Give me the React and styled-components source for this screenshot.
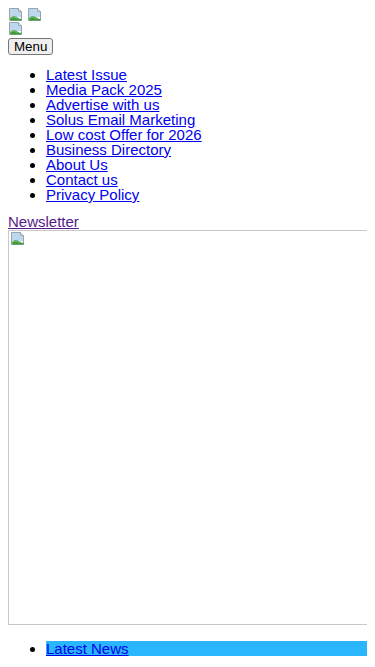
import React from "react";
import styled, { createGlobalStyle } from "styled-components";

const Global = createGlobalStyle`
  body {
    margin: 8px;
    background: #ffffff;
    font-family: "Liberation Sans", Arial, sans-serif;
    font-size: 15px;
    line-height: 15px;
    color: #000000;
  }
`;

const Header = styled.header`
  display: flex;
  flex-direction: column;
`;

const IconRow = styled.div`
  display: flex;
  gap: 3px;
  height: 14px;
  align-items: flex-start;
`;

const MenuButton = styled.button`
  align-self: flex-start;
  margin-top: 2px;
  height: 17px;
  padding: 0 5px;
  font-family: "Liberation Sans", Arial, sans-serif;
  font-size: 13.33px;
  line-height: 13px;
  color: #000;
  background: #efefef;
  border: 1px solid #767676;
  border-radius: 3px;
`;

const List = styled.ul`
  margin: ${(p) => p.$top}px 0 0;
  padding-left: 38px;
  list-style: disc;
`;

const Item = styled.li`
  line-height: 15px;
  background: ${(p) => (p.$highlight ? "#29b6fc" : "transparent")};
`;

const Link = styled.a`
  color: ${(p) => (p.$visited ? "#551a8b" : "#0000ee")};
  text-decoration: underline;
`;

const NewsletterLine = styled.div`
  margin-top: 12px;
  line-height: 15px;
`;

const Banner = styled.div`
  margin-top: 1px;
  width: calc(100vw - 8px);
  height: 395px;
  box-sizing: border-box;
  border: 1px solid #c8c8c8;
  border-right: none;
  padding: 1px 0 0 1px;
`;

const BrokenImage = () => (
  <svg width="16" height="14" viewBox="0 0 16 14">
    <path d="M1.5 0.5h9l3 3v9h-12z" fill="#f4f7fa" stroke="#9aa4ae" />
    <path d="M2 1h8v3h3v5H2z" fill="#bcd8ee" />
    <path d="M2 12.5V10c3-3 6-2 9 0.5 1 0.6 2 0.4 2.5 0V12.5z" fill="#3f9b3a" />
    <path d="M2 12V10.5c2.5-2 5-1.5 7.5 0.5" fill="none" stroke="#7bc46a" />
    <path d="M10.5 0.5v3h3" fill="#e6ebf0" stroke="#9aa4ae" />
  </svg>
);

const menuItems = [
  "Latest Issue",
  "Media Pack 2025",
  "Advertise with us",
  "Solus Email Marketing",
  "Low cost Offer for 2026",
  "Business Directory",
  "About Us",
  "Contact us",
  "Privacy Policy",
];

export default function App() {
  return (
    <>
      <Global />
      <Header>
        <IconRow>
          <BrokenImage />
          <BrokenImage />
        </IconRow>
        <IconRow>
          <BrokenImage />
        </IconRow>
        <MenuButton>Menu</MenuButton>
      </Header>
      <List $top={12}>
        {menuItems.map((label) => (
          <Item key={label}>
            <Link href="#">{label}</Link>
          </Item>
        ))}
      </List>
      <NewsletterLine>
        <Link href="#" $visited>
          Newsletter
        </Link>
      </NewsletterLine>
      <Banner>
        <BrokenImage />
      </Banner>
      <List $top={16}>
        <Item $highlight>
          <Link href="#">Latest News</Link>
        </Item>
      </List>
    </>
  );
}
